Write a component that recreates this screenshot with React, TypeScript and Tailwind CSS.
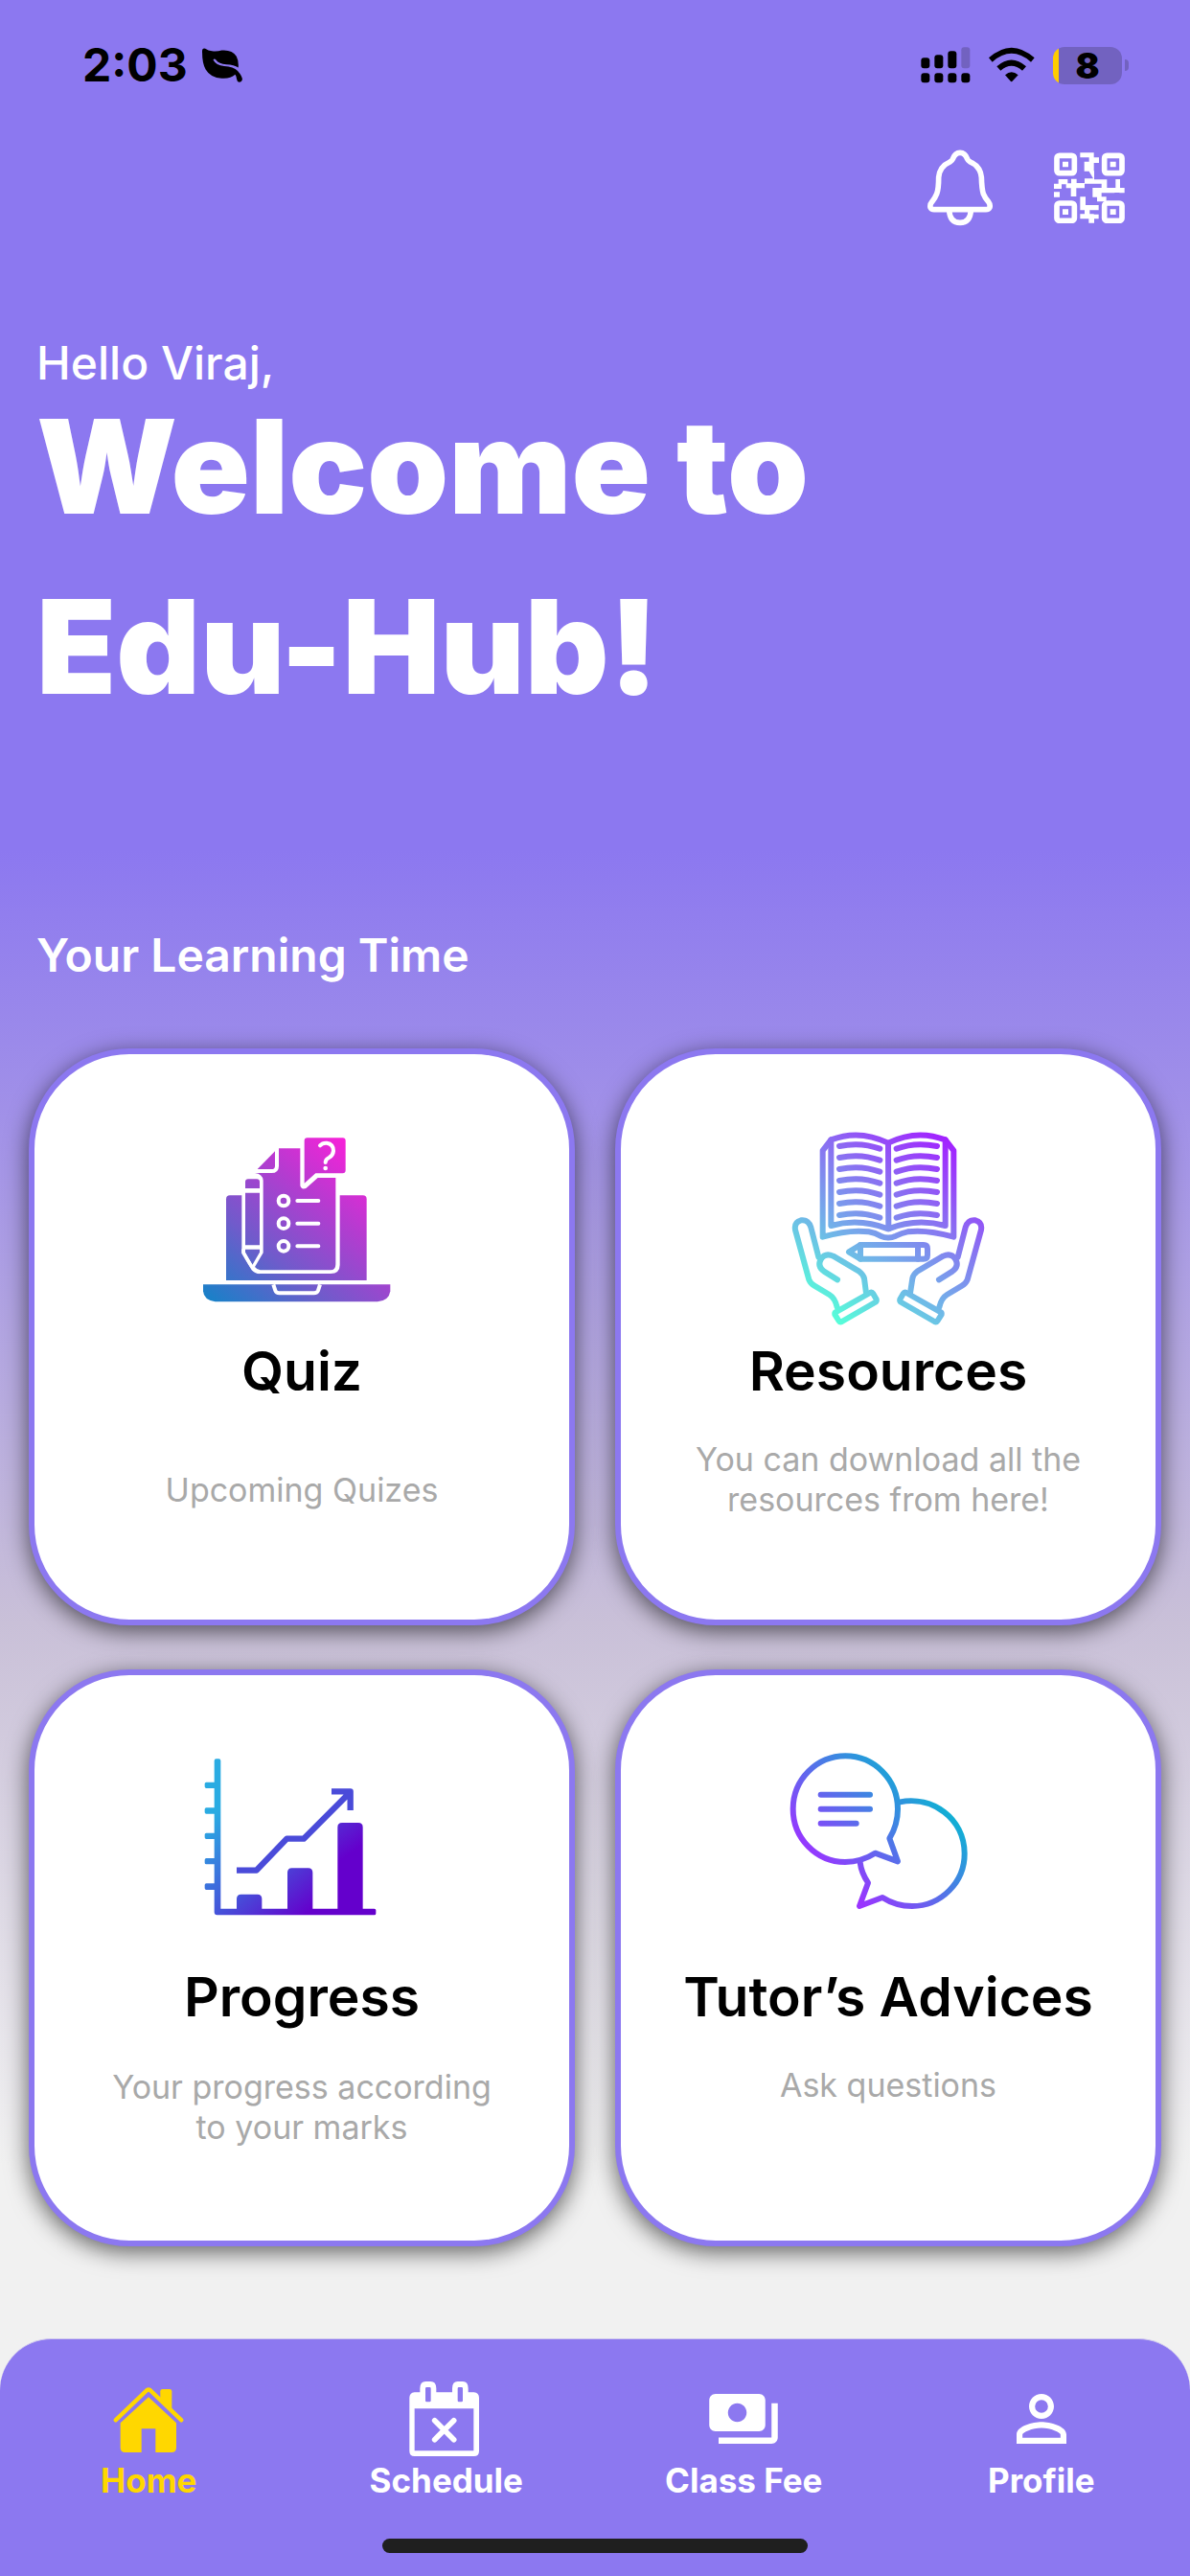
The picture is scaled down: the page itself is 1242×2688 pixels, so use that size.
import type { ReactNode } from "react";
import { MdPayments, MdPersonOutline } from "react-icons/md";

function LeafIcon() {
  return (
    <svg className="h-9 w-11" viewBox="451 89 132 110" aria-hidden="true">
      <path
        d="M453 97Q454 88 463 91Q472 98 484 99Q500 101 515 97Q548 94 562 116Q570 131 568 152Q555 143 530 142Q506 140 497 127Q491 122 488 127Q497 144 523 147Q553 149 566 162Q580 178 581 189Q579 198 571 198Q564 197 563 188Q562 179 558 174Q543 188 515 186Q480 185 464 158Q452 137 453 97Z"
        fill="#000"
      />
    </svg>
  );
}

function SignalIcon() {
  return (
    <svg className="h-[38px] w-[52px]" viewBox="86 86 156 114" aria-hidden="true">
      <rect x="87" y="120" width="27" height="33" rx="9" />
      <rect x="129" y="111" width="27" height="42" rx="9" />
      <rect x="171" y="99" width="27" height="54" rx="9" />
      <rect x="213" y="87" width="27" height="66" rx="9" fill="#7262c0" />
      <rect x="87" y="168" width="27" height="30" rx="9" />
      <rect x="129" y="168" width="27" height="30" rx="9" />
      <rect x="171" y="168" width="27" height="30" rx="9" />
      <rect x="213" y="168" width="27" height="30" rx="9" />
    </svg>
  );
}

function WifiIcon() {
  return (
    <svg className="h-[38px] w-[50px]" viewBox="302 86 150 114" aria-hidden="true">
      <path d="M305 120Q376 56 448 120L437 133Q376 80 316 133Z" />
      <path d="M330 147Q376 106 422 147L410 160Q376 131 342 160Z" />
      <path d="M356 174Q376 155 397 174L378 194Q376 195 374 194Z" />
    </svg>
  );
}

function Battery() {
  return (
    <div className="flex items-center gap-[3px]">
      <div className="flex h-[39px] w-[72px] items-center justify-center rounded-xl bg-[linear-gradient(to_right,#ffcc00_6px,#7262c0_6px)] text-[37px] leading-[39px] font-black">
        8
      </div>
      <div className="h-3 w-1 rounded-r-full bg-[#7262c0]" />
    </div>
  );
}

function BellIcon() {
  return (
    <svg className="h-20 w-[68px]" viewBox="114 408 204 240" fill="none" stroke="#fff" strokeWidth="17" aria-hidden="true">
      <path d="M193 438Q200 418 216 418Q232 418 239 438Q241 443 248 447Q280 461 283 495Q284 531 289 547Q293 558 305 572Q311 580 309 589Q306 596 297 596H135Q126 596 123 589Q121 580 128 572Q139 558 143 547Q149 531 149 495Q152 461 184 447Q191 443 193 438Z" />
      <path d="M182 598Q184 637 216 637Q248 637 250 598" />
    </svg>
  );
}

function QrIcon() {
  return (
    <svg className="h-[74px] w-[74px]" viewBox="510 417 222 222" fill="#fff" aria-hidden="true">
      <g fill="none" stroke="#fff" strokeWidth="17">
        <rect x="519" y="427" width="55" height="55" rx="8" />
        <rect x="668" y="427" width="55" height="55" rx="8" />
        <rect x="519" y="576" width="55" height="55" rx="8" />
        <rect x="668" y="576" width="55" height="55" rx="8" />
      </g>
      <path d="M537 446h18v17h-18zM686 446h18v17h-18zM537 595h18v17h-18zM686 595h18v17h-18z" />
      <path d="M592 418h43v15h16v17h-16v26h-30v-30h15v-13h-28z M619 475h17v27h40v26h27v-27h14v27h14v16h-16v-1h-15v1h-41v12h15v15h-29v-14h-14v-29h28v-13h-53v14h-26v26h-17v-26h-15v-12h-14v14h-25v-16h15v-14h29v13h11v-14h17v13h25v-14h27z" />
      <path d="M510 541h18v16h-18zM592 556h17v26h41v16h-28v12h13v15h1v13h-17v-13h-27v-15h14v-12h-14zM634 611h16v14h-16z" />
    </svg>
  );
}

function QuizArt() {
  return (
    <svg className="h-[225px] w-[240px]" viewBox="15 0 720 675" aria-hidden="true">
      <defs>
        <linearGradient id="quizFill" gradientUnits="userSpaceOnUse" x1="120" y1="610" x2="530" y2="110">
          <stop offset="0" stopColor="#1b80c8" />
          <stop offset="0.35" stopColor="#705bcb" />
          <stop offset="0.7" stopColor="#b53bd0" />
          <stop offset="1" stopColor="#f522d8" />
        </linearGradient>
      </defs>
      <g fill="url(#quizFill)">
        <path d="M138 528V274Q138 262 150 262H566Q578 262 578 274V528Z" />
        <path d="M66 541H652V562Q648 592 612 595H104Q68 590 66 562Z" />
      </g>
      <path
        d="M187 520V205Q190 190 215 188L292 110H383V82H512V196H494V480Q494 507 465 507H240Q216 503 187 440Z"
        fill="#fff"
      />
      <g fill="url(#quizFill)">
        <path d="M187 440L187 528H260L235 507Q222 503 214 492Z" />
        <path d="M303 115H370V232Q373 245 388 240L425 207H481V478Q481 496 465 496H245Q234 494 228 486L254 442V215Q252 195 228 192H280Q303 192 303 170Z" />
        <path d="M291 124V170Q291 180 280 180H236Z" />
        <path d="M392 82H503Q512 82 512 91V184Q512 193 503 193H418L383 224V91Q383 82 392 82Z" />
        <path d="M198 240V220Q198 211 207 211H234Q243 211 243 220V240ZM198 254H243V418H198ZM198 431H243V440L220 480L198 440Z" />
      </g>
      <path d="M192 430V442L222 492Q230 501 242 502" fill="none" stroke="#fff" strokeWidth="11" />
      <path d="M286 541L292 560Q295 568 305 568H413Q423 568 426 560L432 541" fill="none" stroke="#fff" strokeWidth="12" />
      <g fill="none" stroke="#fff" strokeWidth="12" strokeLinecap="round">
        <circle cx="318" cy="279" r="16" />
        <circle cx="318" cy="350" r="16" />
        <circle cx="318" cy="421" r="16" />
        <path d="M361 279H427M361 350H427M361 421H427" />
        <path d="M432 106Q440 97 453 98Q474 101 474 123Q473 136 461 143Q449 149 449 159" />
      </g>
      <circle cx="449" cy="177" r="7" fill="#fff" />
    </svg>
  );
}

function ResourcesArt() {
  const rows = [0, 1, 2, 3, 4, 5, 6];
  return (
    <svg className="h-[225px] w-[240px]" viewBox="21 0 720 675" fill="none" aria-hidden="true">
      <defs>
        <linearGradient id="resourceStroke" gradientUnits="userSpaceOnUse" x1="190" y1="640" x2="570" y2="90">
          <stop offset="0" stopColor="#56ffd9" />
          <stop offset="0.38" stopColor="#74abea" />
          <stop offset="0.68" stopColor="#8b6cf2" />
          <stop offset="1" stopColor="#a222ff" />
        </linearGradient>
      </defs>
      <g stroke="url(#resourceStroke)" strokeWidth="18" strokeLinecap="round" strokeLinejoin="round">
        <path d="M202 88Q290 54 381 98Q470 54 560 88V357Q470 332 381 367Q290 332 202 357Z" />
        <path d="M381 98L382 367" />
        <path d="M202 88L176 122V392Q260 368 320 376Q340 379 357 389Q381 400 405 389Q425 379 442 376Q500 368 586 392V122L560 88" />
        {rows.map((row) => (
          <g key={row}>
            <path d={`M228 ${108 + row * 36}Q295 ${94 + row * 36} 355 ${116 + row * 36}`} />
            <path d={`M407 ${116 + row * 36}Q465 ${94 + row * 36} 534 ${108 + row * 36}`} />
          </g>
        ))}
        <path d="M294 417H492Q504 417 504 429V449Q504 461 492 461H294L258 439Z" />
        <path d="M294 417V461M474 417V461" />
        <path d="M222 526L180 500Q158 484 170 463Q183 441 209 452L290 500Q302 509 306 522L312 568" />
        <path d="M163 455L139 362Q131 337 108 340Q86 346 90 370L133 526Q138 538 150 545L197 573Q214 583 221 612" />
        <path d="M216 628L324 567Q330 564 334 570L344 587Q346 593 340 597L236 657Q230 660 226 654L214 635Q213 630 216 628Z" />
        <path d="M540 526L582 500Q604 484 592 463Q579 441 553 452L472 500Q460 509 457 522L450 568" />
        <path d="M599 455L623 362Q631 337 654 340Q676 346 672 370L629 526Q624 538 612 545L565 573Q548 583 541 612" />
        <path d="M546 628L438 567Q432 564 428 570L418 587Q416 593 422 597L526 657Q532 660 536 654L548 635Q549 630 546 628Z" />
      </g>
    </svg>
  );
}

function ProgressArt() {
  return (
    <svg className="h-[225px] w-[240px]" viewBox="15 -6 720 675" aria-hidden="true">
      <defs>
        <linearGradient id="progressAxis" gradientUnits="userSpaceOnUse" x1="110" y1="240" x2="390" y2="560">
          <stop offset="0" stopColor="#2aabe2" />
          <stop offset="0.55" stopColor="#4455da" />
          <stop offset="1" stopColor="#6400cc" />
        </linearGradient>
        <linearGradient id="progressBars" gradientUnits="userSpaceOnUse" x1="350" y1="240" x2="475" y2="410">
          <stop offset="0" stopColor="#4658da" />
          <stop offset="1" stopColor="#6400cc" />
        </linearGradient>
      </defs>
      <path
        d="M101 82Q101 76 107 76H115Q121 76 121 82V545H171V514Q171 500 185 500H236Q250 500 250 514V545H330V432Q330 418 344 418H395Q409 418 409 432V545H602Q607 545 607 550V560Q607 565 602 565H110Q101 565 101 556V486H76Q71 486 71 481V471Q71 466 76 466H101V406H76Q71 406 71 401V392Q71 387 76 387H101V327H76Q71 327 71 322V313Q71 308 76 308H101V248H76Q71 248 71 243V234Q71 229 76 229H101V168H76Q71 168 71 163V154Q71 149 76 149H101Z"
        fill="url(#progressAxis)"
      />
      <path d="M487 546V290Q487 276 501 276H552Q566 276 566 290V546Z" fill="url(#progressBars)" />
      <path d="M171 425H233L328 326H381L520 187M468 178H527V237" fill="none" stroke="#4a4bd9" strokeWidth="19" strokeLinejoin="round" />
    </svg>
  );
}

function AdvicesArt() {
  return (
    <svg className="h-[225px] w-[240px]" viewBox="21 24 720 675" fill="none" aria-hidden="true">
      <defs>
        <linearGradient id="bubbleFront" gradientUnits="userSpaceOnUse" x1="140" y1="400" x2="410" y2="150">
          <stop offset="0" stopColor="#9538ff" />
          <stop offset="0.5" stopColor="#5770ea" />
          <stop offset="1" stopColor="#18a6d6" />
        </linearGradient>
        <linearGradient id="bubbleBack" gradientUnits="userSpaceOnUse" x1="300" y1="560" x2="590" y2="290">
          <stop offset="0" stopColor="#9a35ff" />
          <stop offset="0.5" stopColor="#5670e8" />
          <stop offset="1" stopColor="#10b0d4" />
        </linearGradient>
      </defs>
      <g strokeWidth="18" strokeLinecap="round" strokeLinejoin="round">
        <path
          d="M418 241C519 221 619 292 620 402C621 492 546 567 456 567Q405 567 363 540L291 567L318 494Q297 463 293 430"
          stroke="url(#bubbleBack)"
        />
        <path
          d="M340 401L411 427L385 355Q411 312 411 263A164 166 0 1 0 246 429Q298 428 340 401Z"
          stroke="url(#bubbleFront)"
        />
        <path d="M170 218H324M170 263H324M170 308H281" stroke="url(#bubbleFront)" />
      </g>
    </svg>
  );
}

function HomeIcon() {
  return (
    <svg className="h-[78px] w-[78px]" viewBox="78 42 234 234" fill="currentColor" aria-hidden="true">
      <path d="M195 91L282 172V249Q282 264 267 264H217V190H173V264H122Q107 264 107 249V172Z" />
      <path d="M92 163L187 72Q195 63 203 72L298 163" fill="none" stroke="currentColor" strokeWidth="13" strokeLinecap="round" />
      <path d="M232 96V73Q232 66 239 66H261Q268 66 268 73V132Z" />
    </svg>
  );
}

function ScheduleIcon() {
  return (
    <svg className="h-[78px] w-[78px]" viewBox="1010 44 234 234" fill="none" stroke="currentColor" aria-hidden="true">
      <path
        fillRule="evenodd"
        fill="currentColor"
        stroke="none"
        d="M1027 78H1044V66Q1044 44 1062 44H1077Q1095 44 1095 66V78H1145V66Q1145 44 1162 44H1178Q1195 44 1195 66V78H1213Q1229 80 1229 95V262Q1229 278 1213 278H1027Q1011 278 1011 262V95Q1011 80 1027 78ZM1027 129V261H1212V129ZM1061 66V104Q1061 108 1065 108H1074Q1078 108 1078 104V66Q1078 62 1074 62H1065Q1061 62 1061 66ZM1162 66V104Q1162 108 1166 108H1174Q1178 108 1178 104V66Q1178 62 1174 62H1166Q1162 62 1162 66Z"
      />
      <path d="M1090 166L1150 226M1150 166L1090 226" strokeWidth="17" strokeLinecap="round" />
    </svg>
  );
}

type CardProps = {
  title: string;
  art: ReactNode;
  lines: string[];
  titleClass: string;
  textClass: string;
};

function Card({ title, art, lines, titleClass, textClass }: CardProps) {
  return (
    <a
      href="#"
      className="flex h-[602px] flex-col items-center rounded-[105px] border-[6px] border-[#8c78f0] bg-white pt-[60px] text-center shadow-[0_6px_24px_rgba(0,0,0,0.6)]"
    >
      {art}
      <h3 className={`${titleClass} text-[57px] leading-[70px] font-semibold text-black`}>{title}</h3>
      <p className={`${textClass} text-[34px] leading-[42px] text-[#a9a9a9]`}>
        {lines.map((line) => (
          <span key={line} className="block">
            {line}
          </span>
        ))}
      </p>
    </a>
  );
}

const tabs = [
  { label: "Home", icon: <HomeIcon />, color: "text-[#ffd700]" },
  { label: "Schedule", icon: <ScheduleIcon />, color: "text-white" },
  { label: "Class Fee", icon: <MdPayments size={78} />, color: "text-white" },
  { label: "Profile", icon: <MdPersonOutline size={78} />, color: "text-white" },
];

export default function App() {
  return (
    <div className="flex min-h-screen flex-col bg-[linear-gradient(to_bottom,#8c78f0_33%,#c9c0d8_63%,#f1f1f1_84%)] font-['Inter',sans-serif]">
      <header>
        <div className="flex h-[136px] items-center justify-between pr-16 pl-[86px] text-black">
          <div className="flex items-center gap-[14px]">
            <span className="text-[48px] leading-[58px] font-bold">2:03</span>
            <LeafIcon />
          </div>
          <div className="flex items-center gap-[18px]">
            <SignalIcon />
            <WifiIcon />
            <Battery />
          </div>
        </div>
        <div className="flex h-[120px] items-center justify-end gap-16 pr-[68px]">
          <button type="button" aria-label="Notifications">
            <BellIcon />
          </button>
          <button type="button" aria-label="Scan QR code">
            <QrIcon />
          </button>
        </div>
      </header>

      <main className="grow pb-24 text-white">
        <div className="px-[38px] pt-[99px]">
          <p className="text-[48px] leading-[48px] font-medium">Hello Viraj,</p>
          <h1 className="-mt-[10px] text-[136px] leading-[188px] font-black">
            Welcome to
            <br />
            Edu-Hub!
          </h1>
          <h2 className="mt-[198px] text-[48px] leading-[60px] font-semibold">Your Learning Time</h2>
        </div>
        <div className="mt-[67px] grid grid-cols-2 gap-x-[42px] gap-y-[46px] px-[30px]">
          <Card
            title="Quiz"
            art={<QuizArt />}
            lines={["Upcoming Quizes"]}
            titleClass="mt-[11px]"
            textClass="mt-[68px]"
          />
          <Card
            title="Resources"
            art={<ResourcesArt />}
            lines={["You can download all the", "resources from here!"]}
            titleClass="mt-[11px]"
            textClass="mt-[36px]"
          />
          <Card
            title="Progress"
            art={<ProgressArt />}
            lines={["Your progress according", "to your marks"]}
            titleClass="mt-[16px]"
            textClass="mt-[38px]"
          />
          <Card
            title="Tutor’s Advices"
            art={<AdvicesArt />}
            lines={["Ask questions"]}
            titleClass="mt-[16px]"
            textClass="mt-[36px]"
          />
        </div>
      </main>

      <nav className="rounded-t-[54px] border-t border-[#cfc8ee] bg-[#8c78f0] pt-11 pb-6">
        <div className="grid grid-cols-4">
          {tabs.map((tab) => (
            <a key={tab.label} href="#" className={`flex flex-col items-center ${tab.color}`}>
              {tab.icon}
              <span className="mt-[5px] text-[35px] leading-[40px] font-bold">{tab.label}</span>
            </a>
          ))}
        </div>
        <div className="mx-auto mt-[41px] h-[15px] w-[444px] rounded-full bg-[#1f1f1f]" />
      </nav>
    </div>
  );
}
